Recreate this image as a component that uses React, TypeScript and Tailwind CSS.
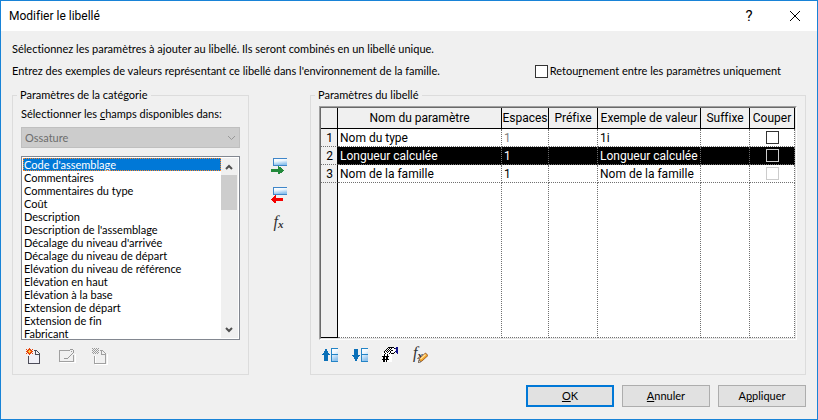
import { useState, type ReactNode } from 'react';

const fields = [
  "Code d'assemblage",
  'Commentaires',
  'Commentaires du type',
  'Coût',
  'Description',
  "Description de l'assemblage",
  "Décalage du niveau d'arrivée",
  'Décalage du niveau de départ',
  'Elévation du niveau de référence',
  'Elévation en haut',
  'Elévation à la base',
  'Extension de départ',
  'Extension de fin',
  'Fabricant',
];

const rows = [
  { name: 'Nom du type', spaces: '1', sample: '1i', muted: true, disabled: false },
  { name: 'Longueur calculée', spaces: '1', sample: 'Longueur calculée', muted: false, disabled: false },
  { name: 'Nom de la famille', spaces: '1', sample: 'Nom de la famille', muted: false, disabled: true },
];

const columns = ['Nom du paramètre', 'Espaces', 'Préfixe', 'Exemple de valeur', 'Suffixe', 'Couper'];

function Icon({ children }: { children: ReactNode }) {
  return (
    <svg width="18" height="18" viewBox="0 0 18 18" fill="none" shapeRendering="crispEdges" aria-hidden="true">
      {children}
    </svg>
  );
}

function ToolButton({ label, disabled, children }: { label: string; disabled?: boolean; children: ReactNode }) {
  return (
    <button type="button" aria-label={label} disabled={disabled} className="block h-[18px] w-[18px]">
      {children}
    </button>
  );
}

function CellGradient() {
  return (
    <defs>
      <linearGradient id="cell" x1="0" y1="0" x2="0.3" y2="1">
        <stop offset="0" stopColor="#fff" />
        <stop offset="0.4" stopColor="#eef6fd" />
        <stop offset="1" stopColor="#8fc3ee" />
      </linearGradient>
    </defs>
  );
}

function RowIcon({ children }: { children: ReactNode }) {
  return (
    <Icon>
      <CellGradient />
      <rect x="2" y="1" width="14" height="8" fill="#3f86c9" />
      <rect x="3" y="2" width="13" height="6" fill="url(#cell)" />
      {children}
    </Icon>
  );
}

function MoveIcon({ down }: { down?: boolean }) {
  return (
    <Icon>
      <CellGradient />
      <path
        d={down ? 'M4 3h4v6h2v1H9v1H8v2H7v2H5v-2H4v-2H3v-1H2V9h2z' : 'M4 15h4V9h2V8H9V7H8V5H7V3H5v2H4v2H3v1H2v1h2z'}
        fill="#0b70b8"
      />
      <path d="M11 2h7v14h-7z" fill="#2484c6" />
      <path d="M12 3h6v5h-6zM12 9h6v6h-6z" fill="url(#cell)" />
    </Icon>
  );
}

function FxIcon({ pencil }: { pencil?: boolean }) {
  return (
    <span className="relative flex h-[18px] w-[18px] items-center pb-1 pl-[3px] font-['Liberation_Serif',serif] italic text-[#333]">
      <span className="text-base leading-none">f</span>
      <span className="pt-1 text-[11px] font-bold leading-none">x</span>
      {pencil && (
        <svg className="absolute inset-0" width="18" height="18" viewBox="0 0 18 18" aria-hidden="true">
          <path d="M8.500 16.500l1-4 6-5.500 2.500 2.500-6 5.500z" fill="#f4a526" stroke="#8a4a1c" strokeWidth="0.800" />
          <path d="M10.500 13l5-4.500" stroke="#ffe7a8" strokeWidth="1.200" />
          <path d="M8.500 16.500l.7-2.500 1.800 1.900z" fill="#fff" stroke="#444" strokeWidth="0.600" />
        </svg>
      )}
    </span>
  );
}

function SheetIcon({ disabled }: { disabled?: boolean }) {
  return (
    <Icon>
      {disabled && <path d="M4.500 9v8.500h11.500V7" stroke="#fff" />}
      <path d="M9 3.500h2.500l3 3v10h-11V9" fill={disabled ? 'none' : '#f0f0f7'} stroke={disabled ? '#a0a0a0' : '#4c4c58'} />
      <path d="M10.500 4v3.500h4" stroke={disabled ? '#a0a0a0' : '#4c4c58'} />
      {disabled ? (
        <path
          d="M1 1h1v1H1zM3 1h1v1H3zM5 1h1v1H5zM7 1h1v1H7zM2 2h1v1H2zM4 2h1v1H4zM6 2h1v1H6zM1 3h1v1H1zM3 3h1v1H3zM5 3h1v1H5zM7 3h1v1H7zM2 4h1v1H2zM4 4h1v1H4zM6 4h1v1H6zM1 5h1v1H1zM3 5h1v1H3zM5 5h1v1H5zM7 5h1v1H7zM2 6h1v1H2zM4 6h1v1H4zM6 6h1v1H6z"
          fill="#999"
        />
      ) : (
        <>
          <path d="M4 1h1v1h1v1h1V2h1v1H7v1h1v1H7v1h1v1H7V6H6v1H5v1H4V7H3V6H2v1H1V6h1V5H1V4h1V3H1V2h1v1h1V2h1z" fill="#e8430a" />
          <path d="M4 3h1v1h1v1H5v1H4V5H3V4h1z" fill="#ffd23c" />
        </>
      )}
    </Icon>
  );
}

function PropertiesIcon() {
  return (
    <Icon>
      <path d="M2 15.500h15V7" stroke="#fff" />
      <path d="M11 3.500H1.500v11h14V8" stroke="#a0a0a0" />
      <path d="M6 11h4v1H6zM10 10h1v1h-1zM11 9h1v1h-1zM12 8h1v1h-1zM13 7h1v1h-1zM14 6h1v1h-1zM15 3h1v3h-1zM12 2h3v1h-3zM11 3h1v1h-1zM13 4h1v1h-1z" fill="#999" />
    </Icon>
  );
}

function HandIcon() {
  return (
    <Icon>
      <path d="M2 6h10v10H2z" fill="#fff" />
      <path d="M4 8h1v2h2V8h1v2h1v1H8v2h1v1H7v2H6v-2H5v2H3v-2H2v-1h1v-2H2v-1h2zM5 11v2h1v-2z" fill="#000" fillRule="evenodd" />
      <path d="M8 2h7v4h-4v1H6V5h1V3h1z" fill="#fff" />
      <path d="M8 1h6v1H8zM14 2h1v1h-1zM7 2h1v1H7zM6 3h1v1H6zM5 4h1v1H5zM4 5h1v2H4zM5 7h1v1H5zM14 6h1v1h-1zM11 7h3v1h-3zM10 6h1v1h-1z" fill="#000" />
      <path
        d="M9 2h1v1H9zM11 2h1v1h-1zM8 3h1v1H8zM10 3h1v1h-1zM7 4h1v1H7zM9 4h1v1H9zM11 4h2v1h-2zM6 5h1v1H6zM8 5h1v1H8zM10 5h1v1h-1zM7 6h1v1H7zM9 7h1v1H9z"
        fill="#000"
      />
      <path d="M15 2h1V1h2v7h-1V7h-1V6h-1V5h1V3h-1z" fill="#14148c" />
    </Icon>
  );
}

function PushButton({ primary, children }: { primary?: boolean; children: ReactNode }) {
  return (
    <button
      type="button"
      className={
        primary
          ? 'flex h-[22px] w-[88px] items-center justify-center border-2 border-[#0078d7] bg-[#e1e1e1]'
          : 'flex h-[22px] w-[88px] items-center justify-center border border-[#adadad] bg-[#e1e1e1]'
      }
    >
      <span>{children}</span>
    </button>
  );
}

export default function App() {
  const [field, setField] = useState(fields[0]);
  const [current, setCurrent] = useState(1);

  return (
    <div className="flex min-h-screen flex-col border border-[#1883d7] bg-[#f0f0f0] font-['Lato','Open_Sans',sans-serif] text-[11px] leading-4 text-black [font-variant-ligatures:none]">
      {/* Title bar */}
      <header className="flex h-[30px] items-center bg-white pl-2 pr-4 font-['Roboto',sans-serif]">
        <h1 className="flex-1 text-xs">Modifier le libellé</h1>
        <button type="button" aria-label="Aide" className="mr-8 w-4 text-[15px]">
          ?
        </button>
        <button type="button" aria-label="Fermer">
          <svg width="12" height="12" viewBox="0 0 12 12" stroke="#000" aria-hidden="true">
            <path d="M1 1l10 10M11 1L1 11" />
          </svg>
        </button>
      </header>

      <main className="flex flex-1 flex-col px-[11px] pt-[10px]">
        <p>Sélectionnez les paramètres à ajouter au libellé. Ils seront combinés en un libellé unique.</p>
        <div className="mt-[6px] flex items-center justify-between pr-[25px]">
          <p>Entrez des exemples de valeurs représentant ce libellé dans l'environnement de la famille.</p>
          <label className="flex items-center gap-[2px]">
            <input type="checkbox" className="h-[13px] w-[13px] appearance-none border border-[#333] bg-white" />
            <span>
              Retou<u>r</u>nement entre les paramètres uniquement
            </span>
          </label>
        </div>

        <div className="mt-2 flex">
          {/* Category parameters */}
          <fieldset className="h-[288px] w-[237px] border border-[#dcdcdc] px-2">
            <legend className="-ml-1 px-[3px]">Paramètres de la catégorie</legend>
            <label htmlFor="category" className="mt-[3px] block">
              Sélectionner les <u>c</u>hamps disponibles dans:
            </label>
            <div className="relative mt-[5px]">
              <select
                id="category"
                disabled
                className="block h-[21px] w-full appearance-none border border-[#bfbfbf] bg-[#ccc] px-[3px] text-[#6d6d6d] opacity-100"
              >
                <option>Ossature</option>
              </select>
              <svg className="absolute right-1 top-2" width="9" height="6" viewBox="0 0 9 6" fill="none" stroke="#999" aria-hidden="true">
                <path d="M1 1l3.500 3.500L8 1" />
              </svg>
            </div>

            <div className="mt-2 flex h-[184px] border border-[#828790] bg-white p-px">
              <select
                size={14}
                aria-label="Champs disponibles"
                value={field}
                onChange={(e) => setField(e.target.value)}
                className="h-full min-w-0 flex-1 overflow-hidden p-0 leading-[13px] outline-none [scrollbar-width:none]"
              >
                {fields.map((name) => (
                  <option
                    key={name}
                    className="h-[13px] min-h-0 p-0 pl-px checked:bg-[linear-gradient(#0078d7,#0078d7)] checked:outline-1 checked:-outline-offset-1 checked:outline-dotted checked:outline-[#ff8728] checked:[-webkit-text-fill-color:#fff]"
                  >
                    {name}
                  </option>
                ))}
              </select>
              <div className="flex w-[17px] flex-col bg-[#f0f0f0]">
                <button type="button" aria-label="Défiler vers le haut" className="flex h-[17px] items-center justify-center pr-px">
                  <svg width="8" height="6" viewBox="0 0 8 6" fill="none" stroke="#505050" strokeWidth="2" aria-hidden="true">
                    <path d="M1 5l3-3 3 3" />
                  </svg>
                </button>
                <div className="mr-px h-[35px] bg-[#cdcdcd]" />
                <button type="button" aria-label="Défiler vers le bas" className="mt-auto flex h-[17px] items-center justify-center pr-px">
                  <svg width="8" height="6" viewBox="0 0 8 6" fill="none" stroke="#505050" strokeWidth="2" aria-hidden="true">
                    <path d="M1 1l3 3 3-3" />
                  </svg>
                </button>
              </div>
            </div>

            <div className="mt-[7px] flex gap-[15px] pl-1">
              <ToolButton label="Nouveau paramètre">
                <SheetIcon />
              </ToolButton>
              <ToolButton label="Modifier le paramètre" disabled>
                <PropertiesIcon />
              </ToolButton>
              <ToolButton label="Supprimer le paramètre" disabled>
                <SheetIcon disabled />
              </ToolButton>
            </div>
          </fieldset>

          {/* Transfer buttons */}
          <div className="flex w-[61px] flex-col items-center gap-[11px] pt-[70px]">
            <ToolButton label="Ajouter au libellé">
              <RowIcon>
                <path d="M0 12h7V9h1v1h2v1h1v1h1v1h1v1h-1v1h-1v1H9v1H7v-2H0z" fill="#238a3c" />
              </RowIcon>
            </ToolButton>
            <ToolButton label="Retirer du libellé">
              <RowIcon>
                <path d="M12 12H5V9H4v1H3v1H2v1H1v1H0v1h1v1h1v1h1v1h2v-2h7z" fill="#f50000" />
              </RowIcon>
            </ToolButton>
            <ToolButton label="Ajouter une valeur calculée">
              <FxIcon />
            </ToolButton>
          </div>

          {/* Label parameters */}
          <fieldset className="h-[288px] min-w-0 flex-1 border border-[#dcdcdc] px-2">
            <legend className="-ml-1 px-[3px]">Paramètres du libellé</legend>
            <div className="mt-[3px] h-[234px] border border-b-white border-l-[#a0a0a0] border-r-white border-t-[#a0a0a0]">
              <div className="h-full border border-b-[#e3e3e3] border-l-[#696969] border-r-[#e3e3e3] border-t-[#696969] bg-white">
                <table className="h-full w-full table-fixed border-separate border-spacing-0 font-['Roboto',sans-serif] text-xs leading-4">
                  <colgroup>
                    <col className="w-[17px]" />
                    <col />
                    <col className="w-[47px]" />
                    <col className="w-[49px]" />
                    <col className="w-[103px]" />
                    <col className="w-[49px]" />
                    <col className="w-[45px]" />
                  </colgroup>
                  <thead>
                    <tr className="h-[21px] bg-[#f0f0f0]">
                      <td className="border-b border-r border-black p-0" />
                      {columns.map((name) => (
                        <th key={name} scope="col" className="whitespace-nowrap border-b border-r border-black p-0 text-center font-normal">
                          {name}
                        </th>
                      ))}
                    </tr>
                  </thead>
                  <tbody>
                    {rows.map((row, i) => {
                      const cell = 'whitespace-nowrap border-b border-r border-dotted border-[#707070] p-0 pl-[2px]';
                      return (
                        <tr key={row.name} onClick={() => setCurrent(i)} className={i === current ? 'h-[18px] bg-black text-white' : 'h-[18px]'}>
                          <th
                            scope="row"
                            className="border-b border-r border-black border-b-[#707070] bg-[#f0f0f0] p-0 pr-1 text-right font-normal text-black [border-bottom-style:dotted]"
                          >
                            {i + 1}
                          </th>
                          <td className={cell}>{row.name}</td>
                          <td className={row.muted ? `${cell} text-[#808080]` : cell}>{row.spaces}</td>
                          <td className={cell} />
                          <td className={cell}>{row.sample}</td>
                          <td className={cell} />
                          <td className="border-b border-r border-dotted border-[#707070] p-0">
                            <input
                              type="checkbox"
                              aria-label={`Couper ${row.name}`}
                              disabled={row.disabled}
                              className={
                                row.disabled || i === current
                                  ? 'mx-auto block h-[13px] w-[13px] appearance-none border border-[#ccc]'
                                  : 'mx-auto block h-[13px] w-[13px] appearance-none border border-[#333]'
                              }
                            />
                          </td>
                        </tr>
                      );
                    })}
                    <tr>
                      <td className="border-b border-r border-black bg-[#f0f0f0]" />
                      {columns.map((name) => (
                        <td key={name} className="border-b border-r border-dotted border-[#707070]" />
                      ))}
                    </tr>
                  </tbody>
                </table>
              </div>
            </div>

            <div className="mt-[6px] flex gap-3 pl-px">
              <ToolButton label="Monter le paramètre">
                <MoveIcon />
              </ToolButton>
              <ToolButton label="Descendre le paramètre">
                <MoveIcon down />
              </ToolButton>
              <ToolButton label="Format des unités">
                <HandIcon />
              </ToolButton>
              <ToolButton label="Modifier la formule">
                <FxIcon pencil />
              </ToolButton>
            </div>
          </fieldset>
        </div>

        <div className="mt-[10px] flex justify-end gap-2">
          <PushButton primary>
            <u>O</u>K
          </PushButton>
          <PushButton>
            <u>A</u>nnuler
          </PushButton>
          <PushButton>
            A<u>p</u>pliquer
          </PushButton>
        </div>
      </main>
    </div>
  );
}
